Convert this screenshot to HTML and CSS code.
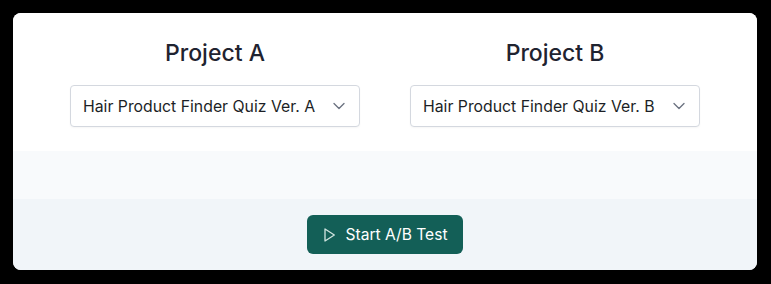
FILE: index.html
```html
<!DOCTYPE html>
<html lang="en">
<head>
<meta charset="utf-8">
<title>A/B Test</title>
<link rel="stylesheet" href="styles.css">
</head>
<body>
<div class="card">
  <div class="projects">
    <div class="project">
      <h2 class="project-title">Project A</h2>
      <div class="select">
        <span class="select-value">Hair Product Finder Quiz Ver. A</span>
        <svg class="chevron" viewBox="0 0 24 24" width="20" height="20" fill="none" stroke="currentColor" stroke-width="1.6" stroke-linecap="round" stroke-linejoin="round"><path d="m6 9 6 6 6-6"/></svg>
      </div>
    </div>
    <div class="project">
      <h2 class="project-title">Project B</h2>
      <div class="select">
        <span class="select-value">Hair Product Finder Quiz Ver. B</span>
        <svg class="chevron" viewBox="0 0 24 24" width="20" height="20" fill="none" stroke="currentColor" stroke-width="1.6" stroke-linecap="round" stroke-linejoin="round"><path d="m6 9 6 6 6-6"/></svg>
      </div>
    </div>
  </div>
  <div class="spacer"></div>
  <div class="footer">
    <button class="start-btn" type="button">
      <svg class="play" viewBox="0 0 24 24" width="16" height="16" fill="none" stroke="currentColor" stroke-width="2" stroke-linecap="round" stroke-linejoin="round"><polygon points="6 3 20 12 6 21 6 3"/></svg>
      <span>Start A/B Test</span>
    </button>
  </div>
</div>
</body>
</html>
```

FILE: styles.css
```css
* { box-sizing: border-box; }
html, body { margin: 0; }
body {
  background: #000;
  padding: 13px 14px 14px 13px;
  font-family: Inter, "Noto Sans", sans-serif;
}
.card {
  width: 744px;
  background: #fff;
  border-radius: 8px;
  overflow: hidden;
}
.projects {
  display: grid;
  grid-template-columns: 1fr 1fr;
  padding: 24px 32px;
  background: #fff;
}
.project {
  display: flex;
  flex-direction: column;
  align-items: center;
}
.project-title {
  margin: 0 0 16px;
  font-size: 23px;
  line-height: 32px;
  font-weight: 500;
  color: #1f2330;
}
.select {
  width: 290px;
  height: 42px;
  display: flex;
  align-items: center;
  justify-content: space-between;
  padding: 0 10px 0 12px;
  border: 1px solid #d4d8df;
  border-radius: 4px;
  background: #fff;
  box-shadow: 0 1px 2px rgba(0,0,0,0.04);
}
.select-value {
  font-size: 15.8px;
  color: #1c1f26;
}
.chevron { color: #6b7280; }
.spacer {
  height: 48px;
  background: #f8fafc;
}
.footer {
  display: flex;
  justify-content: center;
  padding: 16px 0;
  background: #f1f5f9;
}
.start-btn {
  display: flex;
  align-items: center;
  gap: 8px;
  height: 39px;
  padding: 0 15px 0 14px;
  border: none;
  border-radius: 6px;
  background: #135f57;
  color: #fff;
  font-family: inherit;
  font-size: 15.6px;
}
.play { color: #cfe3df; }
```
